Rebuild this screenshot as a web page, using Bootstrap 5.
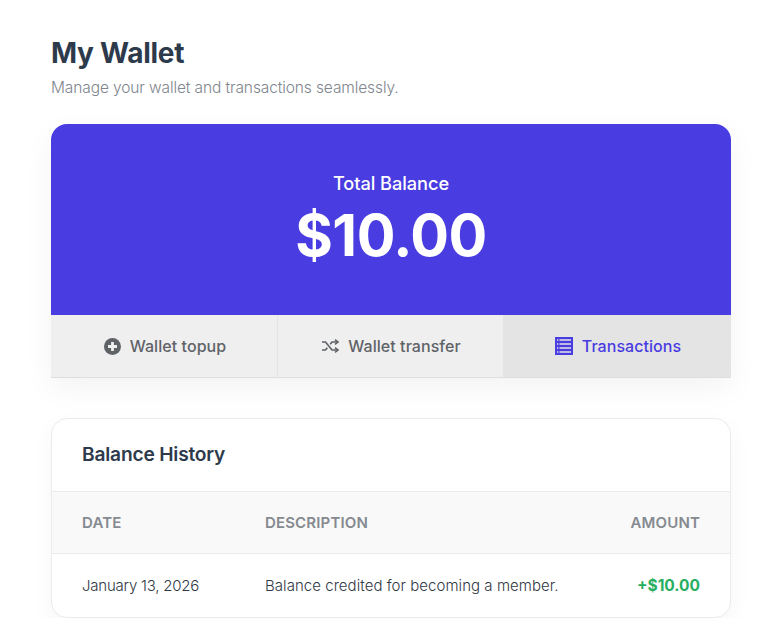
<!DOCTYPE html>
<html lang="en">
<head>
  <meta charset="UTF-8" />
  <title>My Wallet</title>
  <link href="https://cdn.jsdelivr.net/npm/bootstrap@5.3.0/dist/css/bootstrap.min.css" rel="stylesheet">
  <style>
    body { font-family: Inter, "Open Sans", sans-serif; background: #fff; color: #2d3748; overflow: hidden; }
    .wallet-page { width: 680px; margin-left: 51px; padding-top: 35px; }
    .page-title { font-size: 28px; font-weight: 700; line-height: 36px; letter-spacing: -0.27px; color: #2d3a4b; margin: 0; }
    .page-sub { font-size: 15.5px; font-weight: 300; line-height: 24px; letter-spacing: -0.11px; color: #80868e; margin: 5px 0 24px; }
    .balance-card { border-radius: 16px 16px 0 0; overflow: hidden; box-shadow: 0 10px 30px rgba(0,0,0,.05); }
    .balance-top { background: #493de1; color: #fff; height: 191px; padding-top: 47px; }
    .balance-label { font-size: 18.2px; font-weight: 500; line-height: 24px; letter-spacing: -0.05px; }
    .balance-value { font-size: 57.5px; font-weight: 700; line-height: 80px; letter-spacing: -0.5px; }
    .wallet-tab { flex: 0 0 227px; gap: 9px; height: 63px; padding-left: 2px; background: #efefef; color: #5f6368; font-size: 16px; font-weight: 500; letter-spacing: 0.06px; border-bottom: 1px solid #dedede; border-right: 1px solid #e4e4e4; text-decoration: none; }
    .wallet-tab:nth-child(2) { flex-basis: 225px; border-right: 0; }
    .wallet-tab:last-child { flex-basis: 228px; border-right: 0; }
    .wallet-tab.current { background: #e4e4e4; color: #493de1; }
    .history-card { margin-top: 40px; border: 1px solid #e9ebee; border-radius: 16px; overflow: hidden; box-shadow: 0 8px 24px rgba(0,0,0,.04); background: #fff; }
    .history-head { height: 72px; padding: 0 30px 1px; font-size: 19.2px; font-weight: 600; letter-spacing: -0.2px; color: #2d3a4b; }
    .history-row { display: grid; grid-template-columns: 183px 1fr auto; align-items: center; padding: 0 30px; }
    .history-labels { height: 63px; background: #f9f9f9; border-top: 1px solid #e9ebee; border-bottom: 1px solid #e9ebee; font-size: 15px; font-weight: 600; color: #858a90; letter-spacing: .15px; padding-top: 1px; }
    .history-data { height: 63px; padding-top: 1px; font-size: 15px; font-weight: 300; letter-spacing: .05px; color: #2f3744; }
    .date-cell { letter-spacing: -0.22px; }
    .amount-up { color: #27ae60; font-size: 15.5px; font-weight: 700; letter-spacing: 0; }
  </style>
</head>
<body>
  <div class="wallet-page">
    <h1 class="page-title">My Wallet</h1>
    <p class="page-sub">Manage your wallet and transactions seamlessly.</p>

    <!-- Balance -->
    <div class="balance-card">
      <div class="balance-top text-center">
        <div class="balance-label">Total Balance</div>
        <div class="balance-value">$10.00</div>
      </div>
      <div class="d-flex">
        <a href="#" class="wallet-tab d-flex align-items-center justify-content-center">
          <svg width="17" height="17" viewBox="0 0 17 17" aria-hidden="true"><circle cx="8.5" cy="8.5" r="8.5" fill="currentColor"/><path d="M8.5 4v9M4 8.5h9" stroke="#efefef" stroke-width="2.8"/></svg>
          <span>Wallet topup</span>
        </a>
        <a href="#" class="wallet-tab d-flex align-items-center justify-content-center">
          <svg width="17" height="14" viewBox="0 0 17 14" fill="none" stroke="currentColor" stroke-width="1.7" aria-hidden="true"><path d="M0 3h3.5l6.5 8h5M0 11h3.5l1.8-2.2M8.2 5.2 10 3h5"/><path d="M13 .6l3 2.4-3 2.4M13 8.6l3 2.4-3 2.4" stroke-width="1.5"/></svg>
          <span>Wallet transfer</span>
        </a>
        <a href="#" class="wallet-tab current d-flex align-items-center justify-content-center">
          <svg width="18" height="18" viewBox="0 0 18 18" aria-hidden="true"><path fill="currentColor" fill-rule="evenodd" d="M0 0h18v18H0zM2 2.3v1.5h1.3V2.3zM4.5 2.3v1.5H16V2.3zM2 6.3v1.5h1.3V6.3zM4.5 6.3v1.5H16V6.3zM2 10.3v1.5h1.3v-1.5zM4.5 10.3v1.5H16v-1.5zM2 14.3v1.5h1.3v-1.5zM4.5 14.3v1.5H16v-1.5z"/></svg>
          <span>Transactions</span>
        </a>
      </div>
    </div>

    <!-- History -->
    <div class="history-card">
      <div class="history-head d-flex align-items-center">Balance History</div>
      <div class="history-row history-labels">
        <span>DATE</span><span>DESCRIPTION</span><span>AMOUNT</span>
      </div>
      <div class="history-row history-data">
        <span class="date-cell">January 13, 2026</span><span>Balance credited for becoming a member.</span><span class="amount-up">+$10.00</span>
      </div>
    </div>
  </div>
  <script src="https://cdn.jsdelivr.net/npm/bootstrap@5.3.0/dist/js/bootstrap.bundle.min.js"></script>
</body>
</html>
